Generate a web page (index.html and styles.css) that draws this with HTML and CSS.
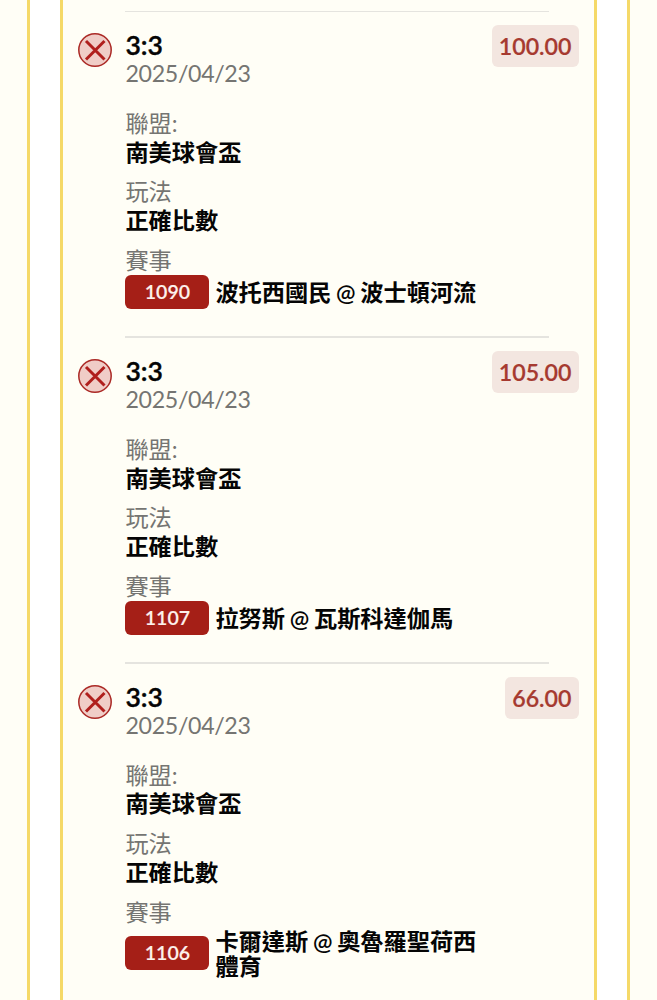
FILE: index.html
```html
<!DOCTYPE html>
<html lang="zh-Hant">
<head>
    <meta charset="UTF-8">
    <meta name="viewport" content="width=device-width, initial-scale=1.0">
    <title>注單明細</title>
    <link rel="stylesheet" href="styles.css">
</head>
<body>

    <div class="card">
        <div class="ticket">

            <div class="bet">
                <hr class="divider">
                <div class="bet-head">
                    <svg class="status" viewBox="0 0 34 34">
                        <circle cx="17" cy="17" r="16.2"/>
                        <path d="M8 8L26.500 26.500M26.500 8L8 26.500"/>
                    </svg>
                    <div class="pick">
                        <div class="score">3:3</div>
                        <div class="date">2025/04/23</div>
                    </div>
                    <div class="odds">100.00</div>
                </div>
                <div class="details">
                    <div class="label">聯盟:</div>
                    <div class="value">南美球會盃</div>
                    <div class="label">玩法</div>
                    <div class="value">正確比數</div>
                    <div class="label">賽事</div>
                    <div class="match">
                        <span class="number">1090</span>
                        <span class="teams">波托西國民 @ 波士頓河流</span>
                    </div>
                </div>
            </div>

            <div class="bet">
                <hr class="divider">
                <div class="bet-head">
                    <svg class="status" viewBox="0 0 34 34">
                        <circle cx="17" cy="17" r="16.2"/>
                        <path d="M8 8L26.500 26.500M26.500 8L8 26.500"/>
                    </svg>
                    <div class="pick">
                        <div class="score">3:3</div>
                        <div class="date">2025/04/23</div>
                    </div>
                    <div class="odds">105.00</div>
                </div>
                <div class="details">
                    <div class="label">聯盟:</div>
                    <div class="value">南美球會盃</div>
                    <div class="label">玩法</div>
                    <div class="value">正確比數</div>
                    <div class="label">賽事</div>
                    <div class="match">
                        <span class="number">1107</span>
                        <span class="teams">拉努斯 @ 瓦斯科達伽馬</span>
                    </div>
                </div>
            </div>

            <div class="bet">
                <hr class="divider">
                <div class="bet-head">
                    <svg class="status" viewBox="0 0 34 34">
                        <circle cx="17" cy="17" r="16.2"/>
                        <path d="M8 8L26.500 26.500M26.500 8L8 26.500"/>
                    </svg>
                    <div class="pick">
                        <div class="score">3:3</div>
                        <div class="date">2025/04/23</div>
                    </div>
                    <div class="odds">66.00</div>
                </div>
                <div class="details">
                    <div class="label">聯盟:</div>
                    <div class="value">南美球會盃</div>
                    <div class="label">玩法</div>
                    <div class="value">正確比數</div>
                    <div class="label">賽事</div>
                    <div class="match">
                        <span class="number">1106</span>
                        <span class="teams">卡爾達斯 @ 奧魯羅聖荷西體育</span>
                    </div>
                </div>
            </div>

        </div>
    </div>

</body>
</html>
```

FILE: styles.css
```css
* {
    margin: 0;
    padding: 0;
    box-sizing: border-box;
}

body {
    background-color: #fffef6;
    font-family: Lato, "Noto Sans CJK TC", sans-serif;
    font-size: 23.2px;
    line-height: 28px;
    color: #050505;
    height: 1000px;
    overflow: hidden;
}

.card {
    height: 1000px;
    margin: 0 27px;
    padding: 0 30.5px 0 30px;
    background-color: #ffffff;
    border: solid #f5d968;
    border-width: 0 3px;
}

.ticket {
    height: 1000px;
    padding: 10.5px 15px 0;
    background-color: #fffef6;
    border: solid #f5d968;
    border-width: 0 3px;
    overflow: hidden;
}

.bet {
    height: 325.8px;
}

.divider {
    height: 1.5px;
    margin: 0 30px 0 47px;
    border: none;
    background-color: #e5e4df;
}

.bet-head {
    display: flex;
    align-items: flex-start;
    padding-top: 13px;
}

.status {
    width: 34px;
    height: 34px;
    margin: 8px 13.5px 0 0;
}

.status circle {
    fill: #f0cdc7;
    stroke: #ab2925;
    stroke-width: 1.5;
}

.status path {
    fill: none;
    stroke: #b01f1d;
    stroke-width: 3;
}

.pick {
    padding-top: 6.4px;
}

.score {
    font-size: 26.5px;
    font-weight: 600;
    -webkit-text-stroke: 0.4px #050505;
}

.date {
    color: #757572;
    letter-spacing: -0.35px;
}

.odds {
    height: 42px;
    margin-left: auto;
    padding: 0 7px;
    border-radius: 6px;
    background-color: #f3e6e0;
    color: #a63a30;
    font-weight: 600;
    line-height: 43px;
    -webkit-text-stroke: 0.2px #a63a30;
}

/* 比分下方的文字 */
.details {
    margin-top: 21.6px;
    padding-left: 47.4px;
}

.label {
    color: #757572;
}

.value {
    margin-bottom: 11.7px;
    padding-top: 0.8px;
    font-weight: 600;
}

.match {
    display: flex;
    align-items: center;
    gap: 6px;
    margin-top: 1px;
}

.number {
    flex: none;
    width: 84px;
    height: 34px;
    border-radius: 6px;
    background-color: #a51f17;
    color: #fdf1ec;
    font-size: 19.5px;
    font-weight: 600;
    line-height: 34px;
    text-align: center;
    -webkit-text-stroke: 0.15px #fdf1ec;
}

.teams {
    width: 270px;
    padding-top: 2px;
    font-weight: 600;
    line-height: 25px;
    word-spacing: -1px;
}
```
